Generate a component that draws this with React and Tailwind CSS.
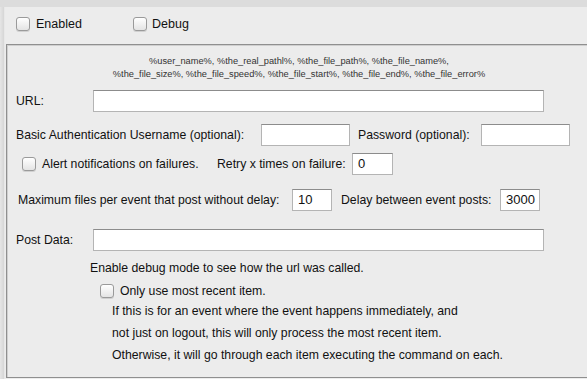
import React from "react";

const Check = ({ className = "" }) => (
  <span
    className={`inline-block w-[14px] h-[14px] shrink-0 rounded-[3px] border border-[#9a9a9a] bg-gradient-to-b from-white to-[#e4e4e4] shadow-[0_1px_0_#d0d0d0] ${className}`}
  />
);

const Field = ({ w, value = "" }) => (
  <div
    className={`${w} h-[22px] shrink-0 bg-white border border-[#b4b4b4] border-t-[#8c8c8c] flex items-center pl-[5px] text-[13px] text-[#111]`}
  >
    {value}
  </div>
);

export default function App() {
  return (
    <div
      className="w-[587px] h-[379px] overflow-hidden bg-[#ececec] text-[12.25px] text-[#111] flex flex-col"
      style={{ fontFamily: '"Liberation Sans", Arial, sans-serif' }}
    >
      {/* top strip */}
      <div className="h-[7px] bg-[#dcdcdc] shrink-0" />

      <div className="flex flex-1">
        {/* left edge */}
        <div className="w-[5px] shrink-0 bg-gradient-to-r from-[#e6e6e6] to-[#d6d6d6] border-r border-[#e8e8e8]" />

        <div className="flex-1 flex flex-col pl-[1px]">
          {/* enabled / debug */}
          <div className="h-[37px] flex items-center pl-[10px] pb-[3px]">
            <Check />
            <span className="ml-[6px] w-[97px] text-[12.5px]">Enabled</span>
            <Check />
            <span className="ml-[5px] text-[12.5px]">Debug</span>
          </div>

          {/* main panel */}
          <div className="h-[334px] border-l border-t border-b border-[#8f8f8f] shadow-[inset_1px_1px_0_#cfcfcf] flex flex-col mr-[-4px]">
            <div className="pt-[10px] text-center text-[9.25px] leading-[13px] text-[#333]">
              <div>%user_name%, %the_real_pathl%, %the_file_path%, %the_file_name%,</div>
              <div>%the_file_size%, %the_file_speed%, %the_file_start%, %the_file_end%, %the_file_error%</div>
            </div>

            <div className="mt-[9px] flex items-center pl-[9px]">
              <span className="w-[77px]">URL:</span>
              <Field w="w-[451px]" />
            </div>

            <div className="mt-[12px] flex items-center pl-[9px]">
              <span className="w-[245px]">Basic Authentication Username (optional):</span>
              <Field w="w-[89px]" />
              <span className="ml-[8px] w-[123px]">Password (optional):</span>
              <Field w="w-[89px]" />
            </div>

            <div className="mt-[7px] flex items-center pl-[15px]">
              <Check />
              <span className="ml-[6px] w-[175px]">Alert notifications on failures.</span>
              <span className="w-[135px]">Retry x times on failure:</span>
              <Field w="w-[41px]" value="0" />
            </div>

            <div className="mt-[14px] flex items-center pl-[11px]">
              <span className="w-[274px]">Maximum files per event that post without delay:</span>
              <Field w="w-[40px]" value="10" />
              <span className="ml-[9px] w-[159px]">Delay between event posts:</span>
              <Field w="w-[40px]" value="3000" />
            </div>

            <div className="mt-[18px] flex items-center pl-[9px]">
              <span className="w-[77px]">Post Data:</span>
              <Field w="w-[451px]" />
            </div>

            <div className="mt-[10px] pl-[83px] leading-[14px]">
              Enable debug mode to see how the url was called.
            </div>

            <div className="mt-[9px] flex items-center pl-[93px] h-[14px]">
              <Check />
              <span className="ml-[6px]">Only use most recent item.</span>
            </div>

            <div className="mt-[2px] pl-[105px] leading-[22px]">
              <div>If this is for an event where the event happens immediately, and</div>
              <div>not just on logout, this will only process the most recent item.</div>
              <div>Otherwise, it will go through each item executing the command on each.</div>
            </div>
          </div>
        </div>
      </div>
    </div>
  );
}
